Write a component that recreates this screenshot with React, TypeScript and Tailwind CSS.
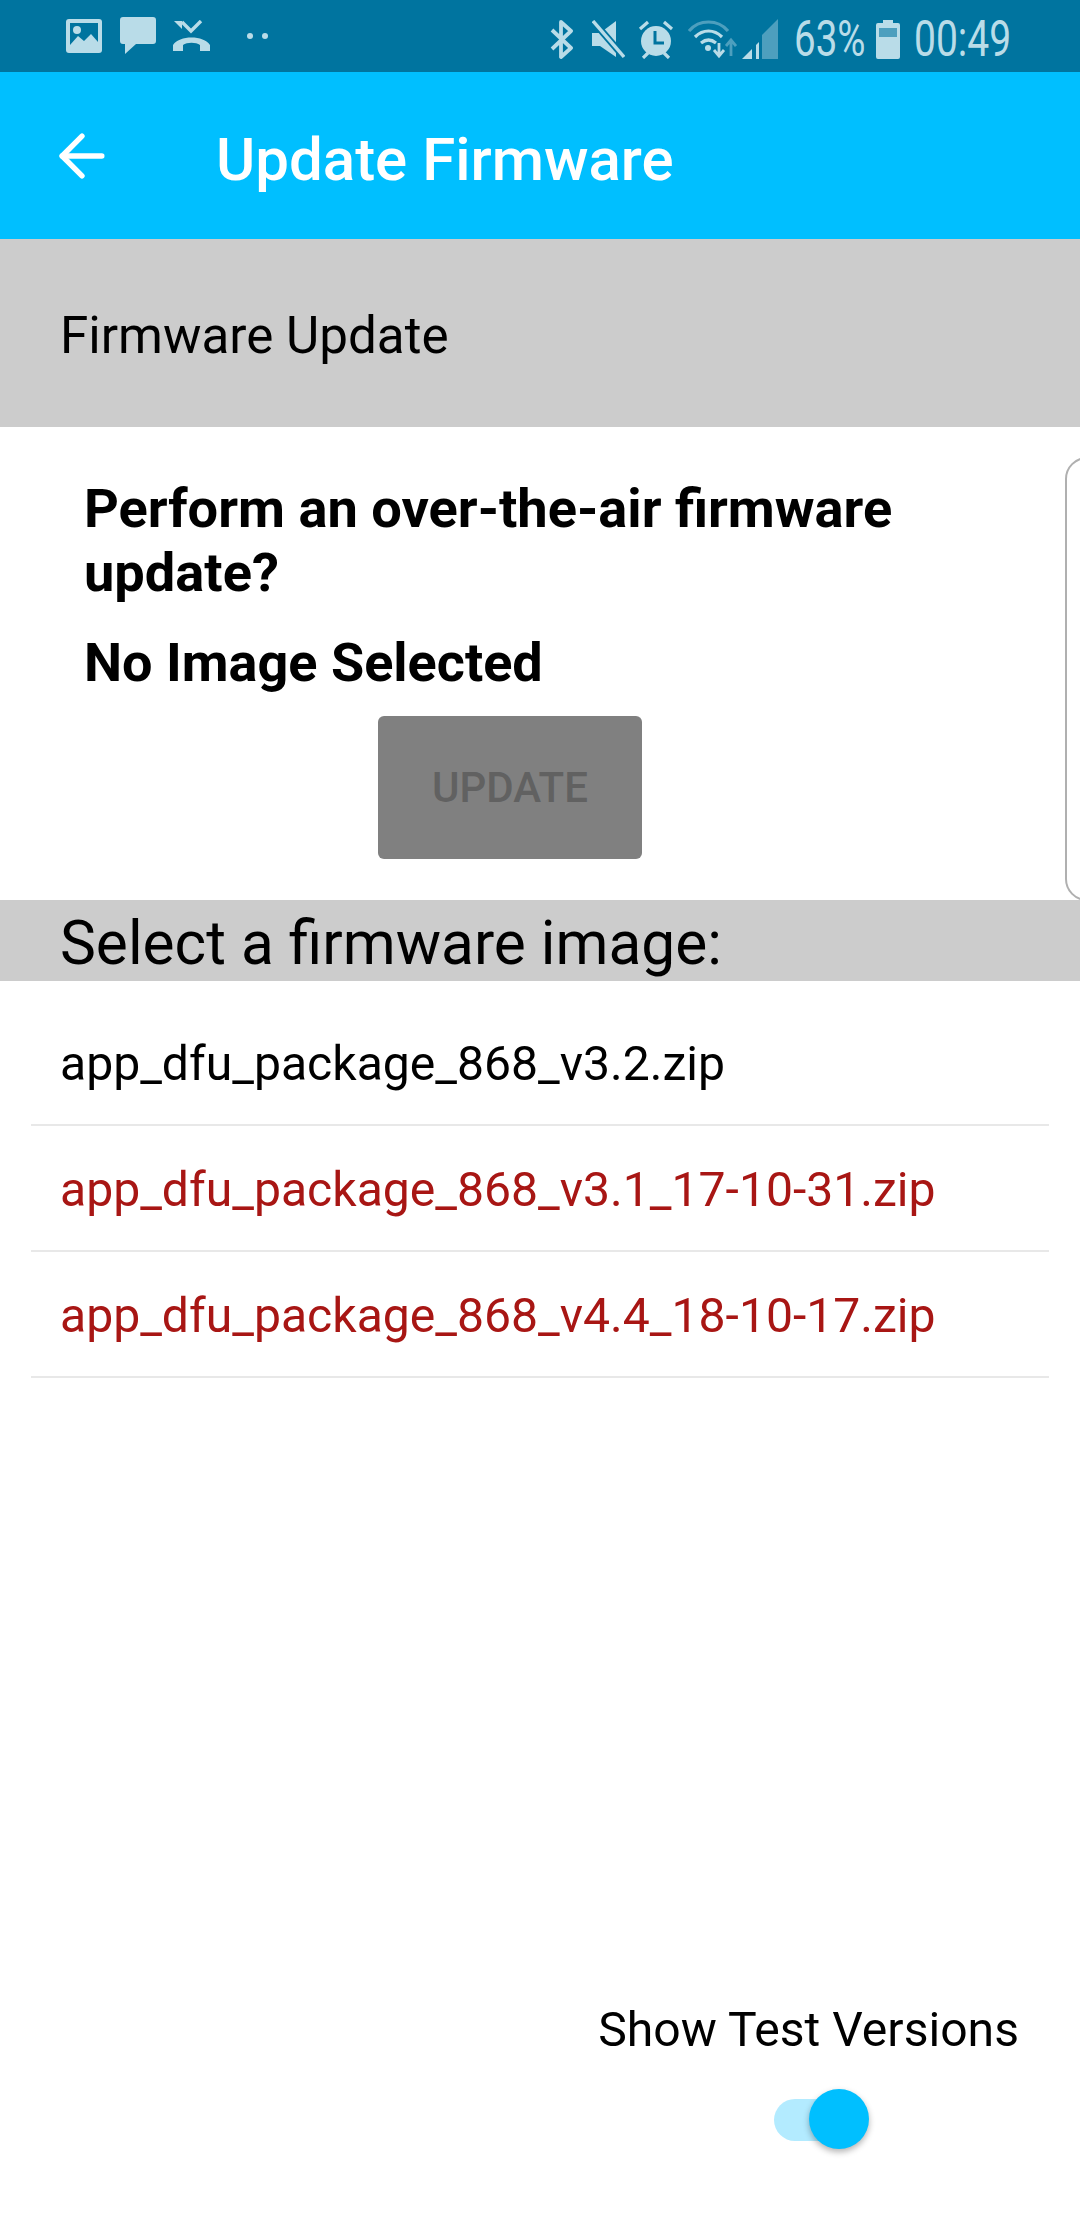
import { ArrowLeft } from 'lucide-react';

const files = [
  { name: 'app_dfu_package_868_v3.2.zip', test: false },
  { name: 'app_dfu_package_868_v3.1_17-10-31.zip', test: true },
  { name: 'app_dfu_package_868_v4.4_18-10-17.zip', test: true },
];

const tint = '#b9dce8';

function StatusBar() {
  return (
    <div className="h-[72px] bg-[#00749f] flex items-center text-[#b9dce8]">
      <svg width="36" height="34" viewBox="0 0 36 34" className="ml-[66px]">
        <rect width="36" height="34" rx="3" fill={tint} />
        <rect x="4" y="4" width="28" height="26" fill="#00749f" />
        <circle cx="11" cy="11" r="4" fill={tint} />
        <path d="M4 26 L12 17 L18 22 L25 15 L32 23 V30 H4 Z" fill={tint} />
      </svg>
      <svg width="36" height="38" viewBox="0 0 36 38" className="ml-[18px]">
        <path d="M3 0 H33 a3 3 0 0 1 3 3 V24 a3 3 0 0 1 -3 3 H16 L5 37 V27 H3 a3 3 0 0 1 -3 -3 V3 a3 3 0 0 1 3 -3 Z" fill={tint} />
      </svg>
      <svg width="38" height="32" viewBox="0 0 38 32" className="ml-[17px]">
        <path d="M9 2 L18 11 L28 1" fill="none" stroke={tint} strokeWidth="3.4" />
        <path d="M9 0 V8 L1 0 Z" transform="translate(0 1)" fill={tint} />
        <path d="M0 31 V25 C6 15 31 15 37 25 V31 H27 V25 C23 22 14 22 10 25 V31 Z" fill={tint} />
      </svg>
      <div className="ml-[36px] flex gap-[9px]">
        <div className="w-[6px] h-[6px] rounded-full bg-[#b9dce8]" />
        <div className="w-[6px] h-[6px] rounded-full bg-[#b9dce8]" />
      </div>
      <div className="flex-1" />
      <div className="flex items-center pt-[6px] pr-[71px]">
        <svg width="23" height="41" viewBox="0 0 23 41">
          <path d="M2 11 L21 29 L11 38 V3 L21 12 L2 30" fill="none" stroke={tint} strokeWidth="3.8" strokeLinejoin="round" />
        </svg>
        <svg width="33" height="39" viewBox="0 0 33 39" className="ml-[19px]">
          <path d="M0 13 H8 L24 1 V37 L8 26 H0 Z" fill={tint} />
          <path d="M1 1 L32 37" stroke="#00749f" strokeWidth="7" />
          <path d="M1 1 L32 37" stroke={tint} strokeWidth="3.4" />
        </svg>
        <svg width="36" height="39" viewBox="0 0 36 39" className="ml-[13px]">
          <circle cx="18" cy="21" r="15" fill={tint} />
          <path d="M17 11 V23 H26" fill="none" stroke="#00749f" strokeWidth="3" />
          <path d="M2 9 L10 2 M34 9 L26 2 M5 38 L10 33 M31 38 L26 33" stroke={tint} strokeWidth="3.2" />
        </svg>
        <svg width="49" height="41" viewBox="0 0 49 41" className="ml-[14px]">
          <path d="M1 12 C11 0 30 0 40 12" fill="none" stroke="#4d9fbe" strokeWidth="3.2" />
          <path d="M7 18 C15 10 26 10 34 18 M13 24 C18 20 23 20 28 24" fill="none" stroke={tint} strokeWidth="3.2" />
          <circle cx="20" cy="29" r="3" fill={tint} />
          <path d="M31 24 V36 M26 31 L31 37 L36 31" fill="none" stroke={tint} strokeWidth="2.8" />
          <path d="M43 37 V22 M38 27 L43 21 L48 27" fill="none" stroke="#4d9fbe" strokeWidth="2.8" />
        </svg>
        <svg width="36" height="40" viewBox="0 0 36 40" className="ml-[5px]">
          <path d="M36 0 V40 H20 V16 Z" fill="#4d9fbe" />
          <path d="M0 40 L10 30 V40 Z" fill={tint} />
          <path d="M14 40 V26 L17 23 V40 Z" fill={tint} />
        </svg>
        <span className="ml-[16px] w-[69px] origin-left scale-x-[0.77] text-[50px] font-normal leading-none whitespace-nowrap">
          63%
        </span>
        <svg width="24" height="39" viewBox="0 0 24 39" className="ml-[13px]">
          <path d="M7 0 H17 V3 H22 a2 2 0 0 1 2 2 V37 a2 2 0 0 1 -2 2 H2 a2 2 0 0 1 -2 -2 V5 a2 2 0 0 1 2 -2 H7 Z" fill={tint} />
          <rect x="3" y="8" width="18" height="9" fill="#4d9fbe" />
        </svg>
        <span className="ml-[14px] w-[95px] origin-left scale-x-[0.78] text-[50px] font-normal leading-none whitespace-nowrap">
          00:49
        </span>
      </div>
    </div>
  );
}

export default function App() {
  return (
    <div className="relative h-[2220px] w-[1080px] flex flex-col bg-white font-['Roboto',sans-serif] overflow-hidden">
      <StatusBar />

      <div className="h-[167px] bg-[#00bfff] flex items-center text-white">
        <ArrowLeft className="ml-[48px] w-[68px] h-[68px]" strokeWidth={1.9} />
        <h1 className="ml-[100px] pt-[8px] text-[60px] font-medium leading-none">Update Firmware</h1>
      </div>

      <div className="h-[188px] bg-[#cccccc] flex items-center pl-[60px] pt-[6px] text-[51.2px] leading-none text-black">
        Firmware Update
      </div>

      <div className="h-[473px] pt-[50px] pl-[84px] pr-[144px] flex flex-col text-black">
        <p className="text-[54.2px] font-bold leading-[64px]">Perform an over-the-air firmware update?</p>
        <p className="mt-[26px] text-[54px] font-bold leading-[64px]">No Image Selected</p>
        <button className="mt-[21px] self-center w-[264px] h-[143px] rounded-[6px] bg-[#808080] text-[42px] font-medium text-[#616161]">
          UPDATE
        </button>
      </div>

      {/* edge panel handle */}
      <div className="absolute left-[1065px] top-[457px] w-[30px] h-[444px] rounded-l-[22px] border-2 border-[#b0b0b0]" />

      <div className="h-[81px] bg-[#cccccc] flex items-center pl-[60px] pt-[8px] text-[60.4px] leading-none text-black">
        Select a firmware image:
      </div>

      <div className="px-[31px] pt-[19px]">
        {files.map((f) => (
          <div key={f.name} className="h-[126px] pt-[5px] border-b-2 border-[#e8e8e8] flex items-center pl-[29px]">
            <span className={`text-[48.1px] leading-none ${f.test ? 'text-[#a81614]' : 'text-black'}`}>{f.name}</span>
          </div>
        ))}
      </div>

      <div className="flex-1" />

      <div className="flex flex-col items-end pr-[61px] pb-[79px]">
        <span className="text-[48.1px] leading-none text-black">Show Test Versions</span>
        <div className="relative mt-[45px] mr-[157px] w-[88px] h-[42px] rounded-full bg-[#b3ebff]">
          <div className="absolute left-[35px] top-[-10px] w-[60px] h-[60px] rounded-full bg-[#00bfff] shadow-[0_3px_6px_rgba(0,0,0,0.3)]" />
        </div>
      </div>
    </div>
  );
}
